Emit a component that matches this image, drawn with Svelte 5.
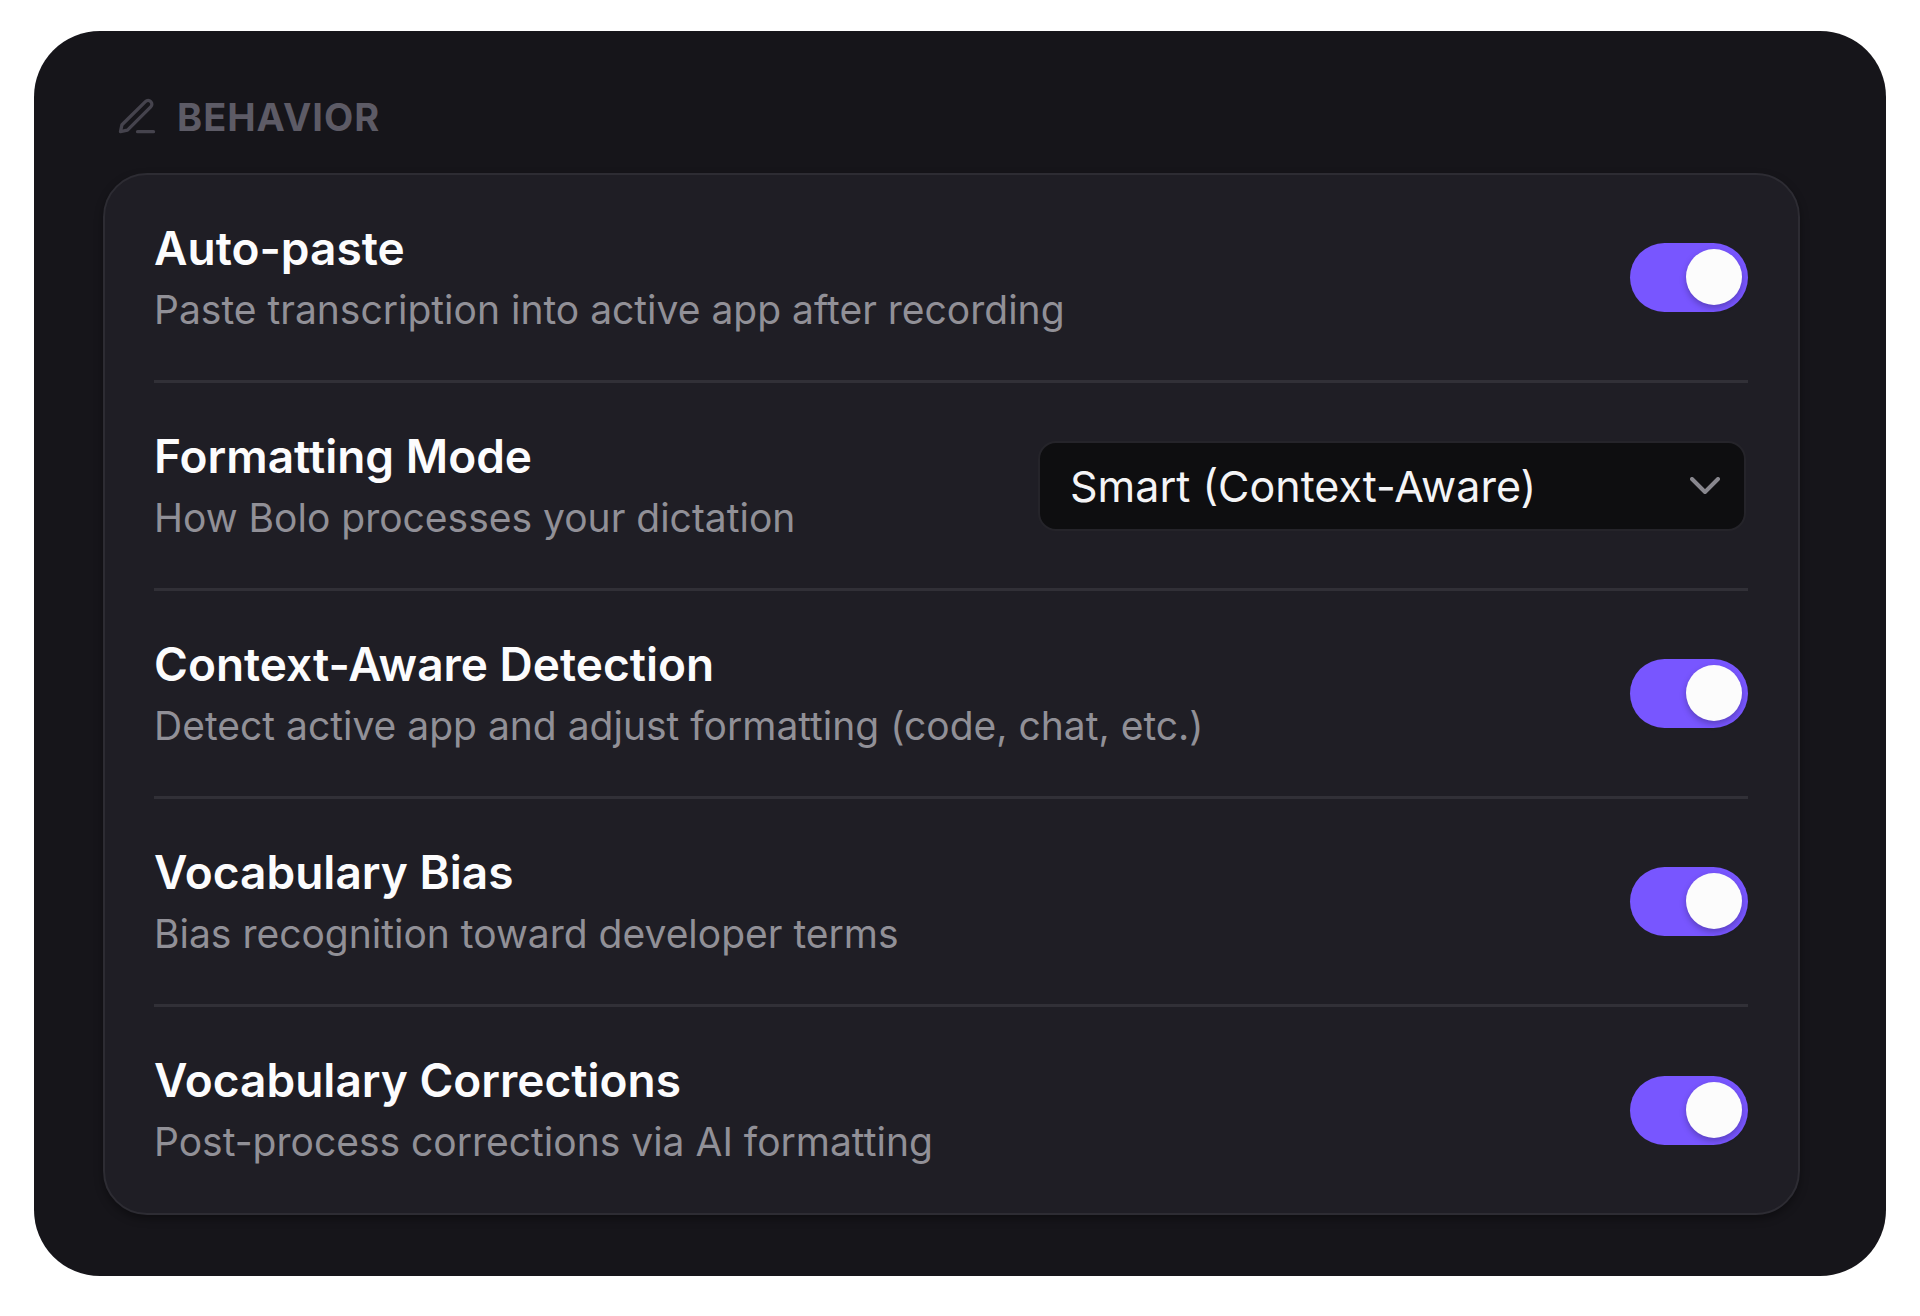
<script>
	let settings = $state([
		{ id: 'auto-paste', title: 'Auto-paste', hint: 'Paste transcription into active app after recording', on: true },
		{ id: 'mode', title: 'Formatting Mode', hint: 'How Bolo processes your dictation', options: ['Smart (Context-Aware)', 'Verbatim', 'Clean'], value: 'Smart (Context-Aware)' },
		{ id: 'detection', title: 'Context-Aware Detection', hint: 'Detect active app and adjust formatting (code, chat, etc.)', on: true },
		{ id: 'bias', title: 'Vocabulary Bias', hint: 'Bias recognition toward developer terms', on: true },
		{ id: 'corrections', title: 'Vocabulary Corrections', hint: 'Post-process corrections via AI formatting', on: true }
	])
</script>

<main>
	<h2>
		<svg viewBox="0 0 24 24" aria-hidden="true">
			<path d="M12.3 20H21" />
			<path d="M16.6 3.6a2.05 2.05 0 0 1 2.9 2.9L6.8 19.2 3 20l.8-3.8Z" />
		</svg>
		Behavior
	</h2>

	<section class="card">
		{#each settings as setting (setting.id)}
			<div class="row">
				<div class="text">
					<label for={setting.id}>{setting.title}</label>
					<p id="{setting.id}-hint">{setting.hint}</p>
				</div>
				{#if setting.options}
					<div class="select">
						<select id={setting.id} bind:value={setting.value} aria-describedby="{setting.id}-hint">
							{#each setting.options as option}
								<option>{option}</option>
							{/each}
						</select>
						<svg viewBox="0 0 30 18" aria-hidden="true"><path d="M2 2l13 13L28 2" /></svg>
					</div>
				{:else}
					<input id={setting.id} type="checkbox" role="switch" bind:checked={setting.on} aria-describedby="{setting.id}-hint" />
				{/if}
			</div>
		{/each}
	</section>
</main>

<style>
	:global(body) {
		margin: 0;
		background: #fff;
	}
	main, main * {
		box-sizing: border-box;
	}
	main {
		margin: 31px 34px 40px;
		padding: 64px 86px 61px 69px;
		border-radius: 66px;
		background: #16151a;
		color: #fcfcfd;
		font-family: Inter, "Liberation Sans", sans-serif;
	}
	h2 {
		display: flex;
		align-items: center;
		gap: 18px;
		margin: 0 0 34px;
		padding-left: 12px;
		font-size: 38px;
		line-height: 44px;
		font-weight: 700;
		letter-spacing: 1px;
		text-transform: uppercase;
		color: #5d5b66;
	}
	h2 svg {
		width: 44px;
		height: 44px;
		fill: none;
		stroke: #45434d;
		stroke-width: 1.8;
		stroke-linecap: round;
		stroke-linejoin: round;
	}
	.card {
		padding: 0 50px 0 49px;
		border: 2px solid #2d2c33;
		border-radius: 44px;
		background: #1f1e25;
		box-shadow: 0 4px 8px rgba(0, 0, 0, 0.35);
	}
	.row {
		display: flex;
		align-items: center;
		justify-content: space-between;
		gap: 40px;
		height: 208px;
		border-bottom: 3px solid #313037;
	}
	.row:last-child {
		height: 206px;
		border-bottom: 0;
	}
	.text {
		min-width: 0;
	}
	label {
		display: block;
		font-size: 46px;
		line-height: 60px;
		font-weight: 600;
	}
	p {
		margin: 4px 0 0;
		font-size: 39px;
		line-height: 56px;
		color: #919097;
	}
	.select {
		position: relative;
		width: 708px;
		flex-shrink: 0;
		margin-right: 2px;
	}
	select {
		display: block;
		appearance: none;
		width: 100%;
		height: 90px;
		padding: 0 80px 0 30px;
		border: 2px solid #25242a;
		border-radius: 18px;
		background: #0e0e10;
		color: #f4f4f6;
		font: 400 43px Inter, "Liberation Sans", sans-serif;
	}
	.select svg {
		position: absolute;
		right: 26px;
		top: 36px;
		width: 30px;
		height: 18px;
		fill: none;
		stroke: #88878e;
		stroke-width: 4;
		stroke-linecap: round;
		stroke-linejoin: round;
		pointer-events: none;
	}
	input {
		appearance: none;
		display: flex;
		flex-shrink: 0;
		width: 118px;
		height: 69px;
		margin: 0;
		padding: 6px;
		border-radius: 35px;
		background: #3a3942;
		cursor: pointer;
	}
	input::before {
		content: '';
		width: 56px;
		height: 56px;
		border-radius: 50%;
		background: #fcfcfc;
		box-shadow: 0 3px 6px rgba(0, 0, 0, 0.25);
	}
	input:checked {
		justify-content: flex-end;
		background: #7856ff;
	}
</style>
